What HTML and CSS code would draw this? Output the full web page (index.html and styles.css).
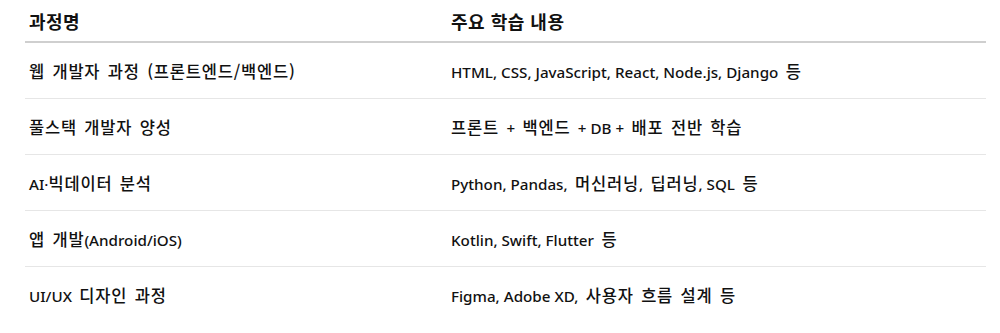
FILE: index.html
```html
<!DOCTYPE html>
<html lang="ko">
<head>
<meta charset="utf-8">
<link rel="stylesheet" href="styles.css">
</head>
<body>
<table class="courses">
  <thead>
    <tr><th class="c1">과정명</th><th class="c2">주요 학습 내용</th></tr>
  </thead>
  <tbody>
    <tr>
      <td>웹 개발자 과정 (프론트엔드/백엔드)</td>
      <td><span class="en">HTML, CSS, JavaScript, React, Node.js, Django</span> 등</td>
    </tr>
    <tr>
      <td>풀스택 개발자 양성</td>
      <td>프론트 <span class="en">+</span> 백엔드 <span class="en">+ DB +</span> 배포 전반 학습</td>
    </tr>
    <tr>
      <td><span class="en">AI·</span>빅데이터 분석</td>
      <td><span class="en">Python, Pandas,</span> 머신러닝<span class="en">,</span> 딥러닝<span class="en">, SQL</span> 등</td>
    </tr>
    <tr>
      <td>앱 개발<span class="en">(Android/iOS)</span></td>
      <td><span class="en">Kotlin, Swift, Flutter</span> 등</td>
    </tr>
    <tr class="last">
      <td><span class="en">UI/UX</span> 디자인 과정</td>
      <td><span class="en">Figma, Adobe XD,</span> 사용자 흐름 설계 등</td>
    </tr>
  </tbody>
</table>
</body>
</html>
```
FILE: styles.css
```css
html, body {
  margin: 0;
  padding: 0;
  background: #ffffff;
}
body {
  font-family: "Noto Sans CJK KR", "Noto Sans", sans-serif;
  font-size: 16.5px;
  color: #111111;
}
.en {
  font-family: "Noto Sans", "Noto Sans CJK KR", sans-serif;
  font-size: 15.2px;
  letter-spacing: 0;
  word-spacing: 0;
  font-weight: 500;
}
.courses {
  margin-left: 25px;
  width: 961px;
  border-collapse: collapse;
}
.courses th {
  text-align: left;
  font-size: 18px;
  font-weight: 700;
  letter-spacing: 0.5px;
  height: 41px;
  padding: 0 4px;
  border-bottom: 2px solid #cfcfcf;
  vertical-align: middle;
}
.courses th.c1 {
  width: 414px;
}
.courses td {
  height: 55px;
  padding: 0 4px;
  border-bottom: 1px solid #e6e6e6;
  vertical-align: middle;
  font-weight: 500;
  letter-spacing: 0.8px;
  word-spacing: 2px;
}
.courses tr.last td {
  border-bottom: none;
}
```
